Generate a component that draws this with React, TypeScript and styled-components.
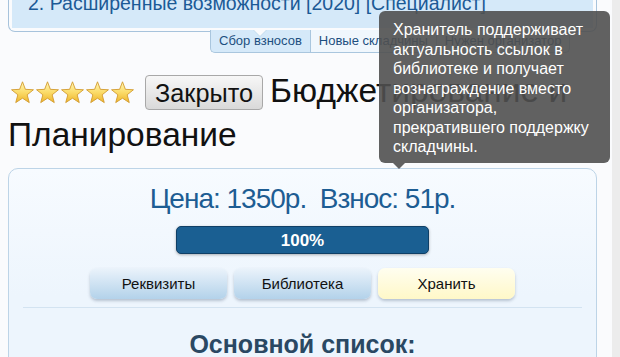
import React from "react";
import styled, { createGlobalStyle } from "styled-components";

const GlobalStyle = createGlobalStyle`
  html, body { margin: 0; padding: 0; }
  body {
    background: #fafbfd;
    font-family: "Liberation Sans", Arial, sans-serif;
    overflow: hidden;
  }
`;

const Page = styled.div`
  position: relative;
  display: flex;
  width: 620px;
  height: 357px;
  overflow: hidden;
`;

const Main = styled.div`
  flex: 1;
  padding: 0 15px 0 8px;
  min-width: 0;
`;

const Strip = styled.div`
  width: 8px;
  background: #ececec;
`;

const TopPanel = styled.div`
  border: 1px solid #a7c3dc;
  border-top: none;
  border-radius: 0 0 7px 7px;
  padding: 0 3px 3px;
`;

const TopInner = styled.div`
  background: #d5e9f9;
  padding: 0 16px 13px;
`;

const TopTitle = styled.div`
  margin-top: -9px;
  font-size: 19.5px;
  line-height: 24px;
  color: #1c5a96;
  white-space: nowrap;
`;

const TabRow = styled.div`
  position: relative;
  display: flex;
  margin: -2px 0 0 202px;
`;

const Tab = styled.div<{ $active?: boolean; $first?: boolean; $last?: boolean }>`
  position: relative;
  height: 22px;
  line-height: 22px;
  padding: 0 8px;
  font-size: 13px;
  color: #1d4f80;
  white-space: nowrap;
  background: ${(p) => (p.$active ? "#d5e9f9" : "#f0f7fd")};
  border: 1px solid #a9c6de;
  border-top: none;
  border-right: ${(p) => (p.$last ? "1px solid #a9c6de" : "none")};
  border-radius: ${(p) =>
    p.$first ? "0 0 0 5px" : p.$last ? "0 0 5px 0" : "0"};

  ${(p) =>
    p.$active &&
    `
    &::before {
      content: "";
      position: absolute;
      top: 0;
      left: 50%;
      margin-left: -7px;
      border-left: 7px solid transparent;
      border-right: 7px solid transparent;
      border-top: 7px solid #c4dced;
    }
    &::after {
      content: "";
      position: absolute;
      top: 0;
      left: 50%;
      margin-left: -6px;
      border-left: 6px solid transparent;
      border-right: 6px solid transparent;
      border-top: 6px solid #fafbfd;
    }
  `}
`;

const Heading = styled.h1`
  margin: 16px 0 0;
  font-size: 33.5px;
  line-height: 44px;
  font-weight: normal;
  color: #111;
`;

const Stars = styled.svg`
  display: inline-block;
  vertical-align: -2px;
  margin: 0 10px 0 2px;
`;

const ClosedButton = styled.button`
  display: inline-block;
  vertical-align: baseline;
  margin: 0 7px 0 0;
  padding: 4px 9px 2px;
  font-family: "Liberation Sans", Arial, sans-serif;
  font-size: 25.3px;
  line-height: 27px;
  color: #111;
  background: linear-gradient(#f7f7f7, #d9d9d9);
  border: 1px solid #a8a8a8;
  border-radius: 4px;
`;

const Panel = styled.div`
  margin-top: 11px;
  border: 1px solid #bdd4e7;
  border-radius: 10px;
  background: linear-gradient(#f7fbff, #edf5fd 60%);
  padding: 14px 14px 20px;
`;

const Price = styled.div`
  text-align: center;
  font-size: 28px;
  line-height: 32px;
  letter-spacing: -1px;
  color: #1d5d93;
  white-space: pre;
`;

const Progress = styled.div`
  width: 251px;
  height: 26px;
  margin: 11px auto 0;
  background: #1a5f92;
  border: 1px solid #0f3f66;
  border-radius: 5px;
  box-shadow: 0 1px 3px rgba(0, 0, 0, 0.3);
  color: #fff;
  font-weight: bold;
  font-size: 17px;
  line-height: 27px;
  text-align: center;
`;

const ButtonRow = styled.div`
  display: flex;
  justify-content: center;
  gap: 7px;
  margin-top: 14px;
`;

const ActionButton = styled.div<{ $yellow?: boolean }>`
  width: 137px;
  height: 31px;
  line-height: 31px;
  text-align: center;
  font-size: 15px;
  color: #111;
  border-radius: 7px;
  background: ${(p) =>
    p.$yellow
      ? "linear-gradient(#fffef0, #fff8c8)"
      : "linear-gradient(#ebf3fb, #b3d2ea)"};
  box-shadow: 0 2px 3px rgba(60, 80, 110, 0.3);
`;

const Separator = styled.div`
  margin-top: 8px;
  border-top: 1px solid #d3e3f1;
`;

const ListTitle = styled.div`
  margin-top: 22px;
  text-align: center;
  font-size: 25px;
  line-height: 29px;
  font-weight: bold;
  color: #2a4863;
`;

const Tooltip = styled.div`
  position: absolute;
  left: 379px;
  top: 11px;
  width: 207px;
  padding: 9px 10px 6.5px 14px;
  background: rgba(80, 80, 80, 0.9);
  border-radius: 6px;
  color: #fff;
  font-size: 16px;
  line-height: 19.5px;
  white-space: nowrap;

  &::after {
    content: "";
    position: absolute;
    left: 14px;
    bottom: -6px;
    border-left: 6px solid transparent;
    border-right: 6px solid transparent;
    border-top: 6px solid rgba(80, 80, 80, 0.9);
  }
`;

function starPoints(cx: number, cy: number, ro: number, ri: number) {
  const pts: string[] = [];
  for (let i = 0; i < 10; i++) {
    const r = i % 2 === 0 ? ro : ri;
    const a = -Math.PI / 2 + (i * Math.PI) / 5;
    pts.push(`${(cx + r * Math.cos(a)).toFixed(2)},${(cy + r * Math.sin(a)).toFixed(2)}`);
  }
  return pts.join(" ");
}

const StarRow = () => (
  <Stars width={125} height={23} viewBox="0 0 125 23">
    <defs>
      <linearGradient id="starFill" x1="0" y1="0" x2="0" y2="1">
        <stop offset="0" stopColor="#fff7b8" />
        <stop offset="0.5" stopColor="#fbdc6a" />
        <stop offset="1" stopColor="#eeb52a" />
      </linearGradient>
    </defs>
    {[0, 1, 2, 3, 4].map((i) => (
      <polygon
        key={i}
        points={starPoints(12.5 + i * 25, 12.3, 11.5, 4.9)}
        fill="url(#starFill)"
        stroke="#d39b2e"
        strokeWidth={0.9}
        strokeLinejoin="round"
      />
    ))}
  </Stars>
);

export default function App() {
  return (
    <>
      <GlobalStyle />
      <Page>
        <Main>
          <TopPanel>
            <TopInner>
              <TopTitle>2. Расширенные возможности [2020] [Специалист]</TopTitle>
            </TopInner>
          </TopPanel>
          <TabRow>
            <Tab $active $first>Сбор взносов</Tab>
            <Tab>Новые складчины</Tab>
            <Tab $last>Нужен организатор</Tab>
          </TabRow>
          <Heading>
            <StarRow />
            <ClosedButton>Закрыто</ClosedButton>
            Бюджетирование и Планирование
          </Heading>
          <Panel>
            <Price>{"Цена: 1350р.  Взнос: 51р."}</Price>
            <Progress>100%</Progress>
            <ButtonRow>
              <ActionButton>Реквизиты</ActionButton>
              <ActionButton>Библиотека</ActionButton>
              <ActionButton $yellow>Хранить</ActionButton>
            </ButtonRow>
            <Separator />
            <ListTitle>Основной список:</ListTitle>
          </Panel>
        </Main>
        <Strip />
        <Tooltip>
          Хранитель поддерживает
          <br />
          актуальность ссылок в
          <br />
          библиотеке и получает
          <br />
          вознаграждение вместо
          <br />
          организатора,
          <br />
          прекратившего поддержку
          <br />
          складчины.
        </Tooltip>
      </Page>
    </>
  );
}
